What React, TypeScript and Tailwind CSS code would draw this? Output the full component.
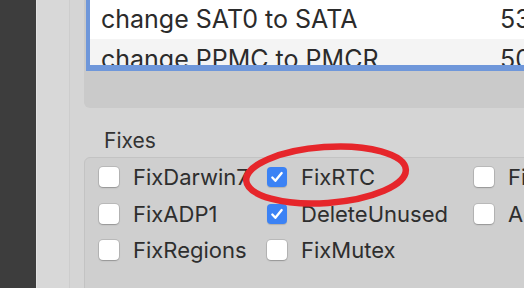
const fixes: { label: string; checked: boolean }[][] = [
  [
    { label: "FixDarwin7", checked: false },
    { label: "FixRTC", checked: true },
    { label: "FixIPIC", checked: false },
  ],
  [
    { label: "FixADP1", checked: false },
    { label: "DeleteUnused", checked: true },
    { label: "AddMCHC", checked: false },
  ],
  [
    { label: "FixRegions", checked: false },
    { label: "FixMutex", checked: false },
    { label: "", checked: false },
  ],
];

function Checkbox({ checked }: { checked: boolean }) {
  if (checked) {
    return (
      <span className="flex h-[20px] w-[20px] shrink-0 items-center justify-center rounded-[4px] bg-[#3b82f5] shadow-[0_1px_1px_rgba(0,0,0,0.15)]">
        <svg viewBox="0 0 20 20" className="h-[18px] w-[18px]" fill="none">
          <path d="M4.8 10.6l3.4 3.6L15.2 5.6" stroke="white" strokeWidth="2.6" strokeLinecap="round" strokeLinejoin="round" />
        </svg>
      </span>
    );
  }
  return (
    <span className="h-[20px] w-[20px] shrink-0 rounded-[4px] bg-white shadow-[0_0_0_1px_rgba(0,0,0,0.1),0_1px_1.5px_rgba(0,0,0,0.2)]" />
  );
}

export default function App() {
  return (
    <div className="relative flex h-[288px] w-[524px] overflow-hidden bg-[#d5d5d5] font-['Inter','Liberation_Sans',sans-serif] text-[#2b2b2b]">
      {/* window chrome on the left */}
      <div className="w-[36px] shrink-0 bg-[#3d3d3d]" />
      <div className="w-[34px] shrink-0 border-l border-[#e2e2e2] border-r border-r-[#cdcdcd] bg-[#d8d8d8]" />

      <div className="flex min-w-0 flex-1 flex-col pl-[14px]">
        {/* table scroll view */}
        <div className="w-[480px] shrink-0 rounded-b-[6px] bg-[#cacaca] pb-[37px]">
          <div className="ml-[2px] h-[71px] overflow-hidden border-x-[4px] border-b-[6px] border-[#6f97da] bg-white text-[25px]">
            <div className="flex h-[39px] items-center bg-white pl-[11px]">
              <span className="w-[399px] shrink-0">change SAT0 to SATA</span>
              <span>53</span>
            </div>
            <div className="flex h-[41px] items-center bg-[#f4f4f4] pl-[11px]">
              <span className="w-[399px] shrink-0">change PPMC to PMCR</span>
              <span>50</span>
            </div>
          </div>
        </div>

        <div className="mt-[21px] pl-[20px] text-[21px] leading-[24px] text-[#333]">Fixes</div>

        <div className="mt-[4px] h-[200px] w-[480px] shrink-0 rounded-[6px] border border-[#c3c3c3] bg-[#cfcfcf] pl-[14px] pt-[9px]">
          <div className="grid grid-cols-[168px_207px_auto] gap-y-[16.5px] text-[22px] leading-[20px] text-[#2e2e2e]">
            {fixes.flat().map((f, i) =>
              f.label ? (
                <div key={i} className="flex h-[20px] items-center gap-[14px] whitespace-nowrap">
                  <Checkbox checked={f.checked} />
                  <span>{f.label}</span>
                </div>
              ) : (
                <div key={i} />
              )
            )}
          </div>
        </div>
      </div>

      {/* red annotation */}
      <svg className="pointer-events-none absolute left-0 top-0" width="524" height="288" viewBox="0 0 524 288">
        <ellipse cx="326" cy="175" rx="80" ry="28" fill="none" stroke="#e6262b" strokeWidth="6.5" transform="rotate(-4 326 175)" />
      </svg>
    </div>
  );
}
